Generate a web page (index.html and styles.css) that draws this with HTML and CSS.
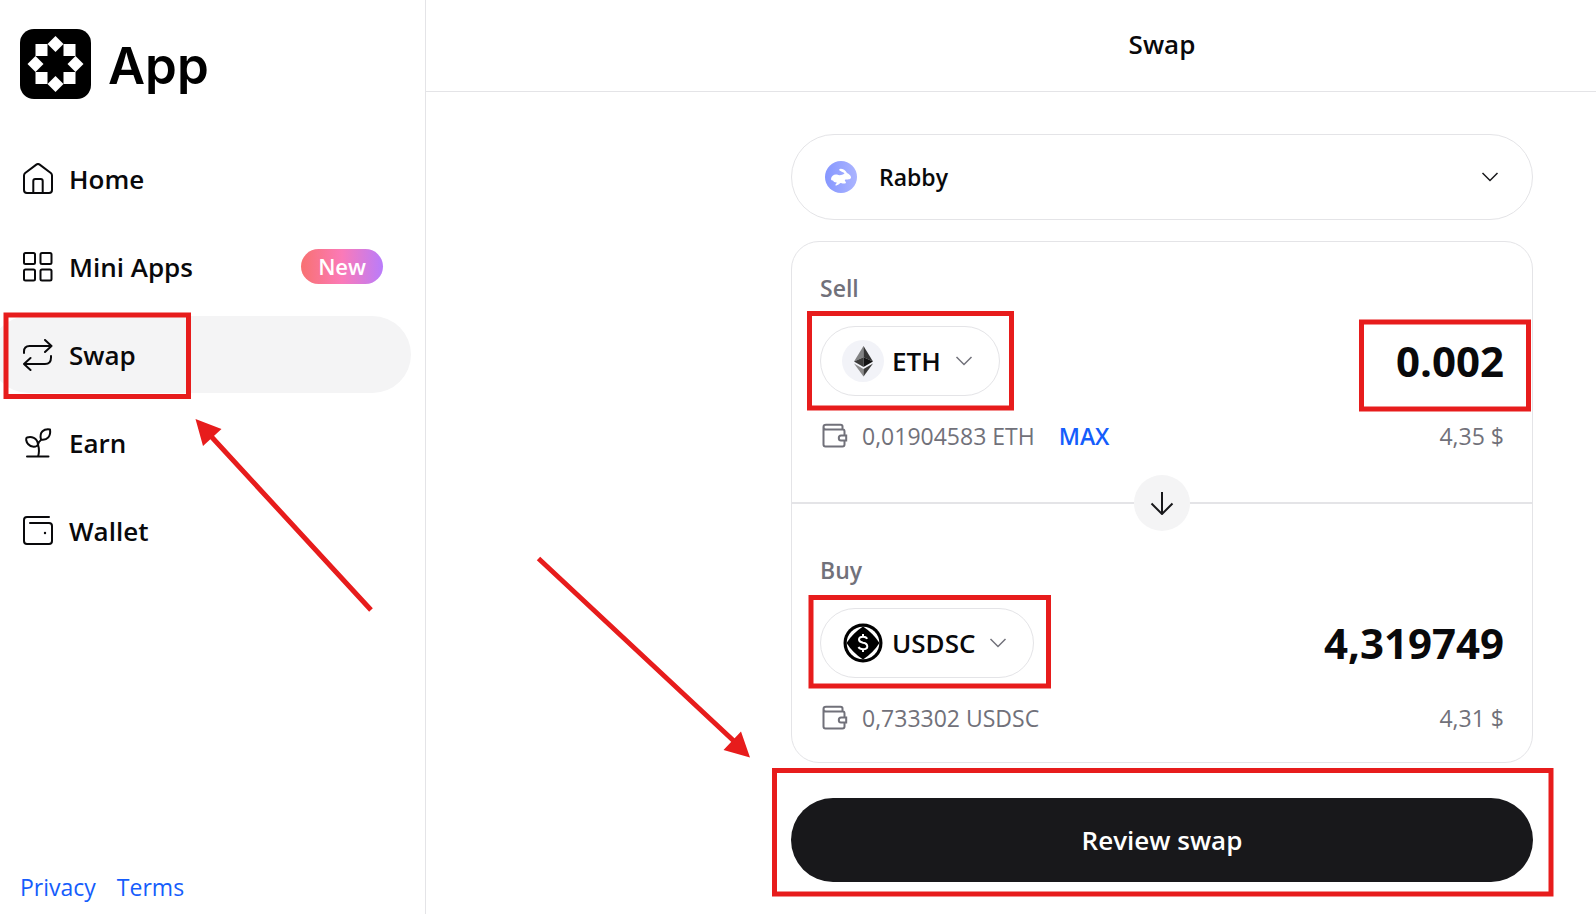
FILE: index.html
```html
<!DOCTYPE html>
<html lang="en">
<head>
<meta charset="utf-8">
<meta name="viewport" content="width=device-width, initial-scale=1">
<title>Swap</title>
<link rel="stylesheet" href="styles.css">
</head>
<body>
<div class="app">
  <aside class="sidebar">
    <a class="brand" href="#">
      <svg class="brand-mark" viewBox="0 0 71 70" aria-hidden="true">
        <rect width="71" height="70" rx="14"/>
        <g fill="#fff">
          <path d="M35.500 7l8 8-8 8-8-8zM35.500 47l8 8-8 8-8-8zM15.500 27l8 8-8 8-8-8zM55.500 27l8 8-8 8-8-8z"/>
          <path d="M15.500 15h12v12h-12zM43.500 15h12v12h-12zM15.500 43h12v12h-12zM43.500 43h12v12h-12z"/>
        </g>
      </svg>
      <span>App</span>
    </a>
    <nav class="nav">
      <a class="nav-item" href="#">
        <svg class="nav-icon" viewBox="0 0 32 32" aria-hidden="true"><path d="M2 12.500Q2 11 3.200 10L14.300 1.600Q16 .4 17.700 1.600L28.800 10Q30 11 30 12.500V27Q30 30 27 30H5Q2 30 2 27zM11.300 30V18Q11.300 16 13.300 16H18.700Q20.700 16 20.700 18V30"/></svg>
        <span>Home</span>
      </a>
      <a class="nav-item" href="#">
        <svg class="nav-icon" viewBox="0 0 32 32" aria-hidden="true"><rect x="2" y="2" width="11" height="11" rx="1.500"/><rect x="18.500" y="2" width="11" height="11" rx="1.500"/><rect x="2" y="18.500" width="11" height="11" rx="1.500"/><rect x="18.500" y="18.500" width="11" height="11" rx="1.500"/></svg>
        <span>Mini Apps</span>
        <span class="tag">New</span>
      </a>
      <a class="nav-item nav-item-active" href="#" aria-current="page">
        <svg class="nav-icon" viewBox="0 0 32 32" aria-hidden="true"><path d="M2 14V12.500Q2 7 7.500 7H29.500M23 1L29.500 7L23 13M29 17V18.500Q29 25 23 25H2M8.500 19L2 25L8.500 31"/></svg>
        <span>Swap</span>
      </a>
      <a class="nav-item" href="#">
        <svg class="nav-icon" viewBox="0 0 32 32" aria-hidden="true"><path d="M5 29.500H26.500M16 29.500C17.600 25 17.300 22 16 17.500M16 17.500C14.800 20.500 9 20.500 6 17C4 14.500 3.500 11 5 10.500C9 9 15.500 10.500 16 17.500zM16 17.500C16.300 15.500 17 14.500 19 13M19 12.500C17 5 22 1.500 28 2.500C29 9 25.500 13.500 19 12.500z"/></svg>
        <span>Earn</span>
      </a>
      <a class="nav-item" href="#">
        <svg class="nav-icon" viewBox="0 0 32 32" aria-hidden="true"><path d="M27 2H5Q2 2 2 5V26Q2 29 5 29H27Q30 29 30 26V11Q30 8 27 8H8"/><circle class="dot" cx="23" cy="18" r="1.200"/></svg>
        <span>Wallet</span>
      </a>
    </nav>
    <footer class="legal">
      <a href="#">Privacy</a>
      <a href="#">Terms</a>
    </footer>
  </aside>

  <main class="main">
    <header class="topbar"><h1 class="title">Swap</h1></header>
    <form class="swap">
      <button class="account" type="button" aria-haspopup="listbox">
        <svg class="avatar" viewBox="0 0 32 32" aria-hidden="true">
          <defs>
            <linearGradient id="rabby" x1="0" y1="0" x2="1" y2="0"><stop offset="0" stop-color="#8697ff"/><stop offset="1" stop-color="#abb4ff"/></linearGradient>
          </defs>
          <circle cx="16" cy="16" r="16" fill="url(#rabby)"/>
          <path fill="#fff" d="M6 18C6.500 14.500 9 13 12 13.500C15 15 17 14 19.500 12.500C18 10.500 14.300 10.500 14.200 8.500C15 6.800 20.500 8.500 22 12C24.500 13 26.500 15.500 26 17C25 19 22.500 18 20 18.800C19 19.500 21 20.500 21 22C19.500 23 17.500 22.500 16 22C14.500 22 13.500 24.500 10.500 24.500C10 23.500 11.500 22.800 11.800 21.500C9.500 21.500 8.500 20.500 8 19.500C7 19.500 6 19 6 18z"/>
        </svg>
        <span>Rabby</span>
        <svg class="chevron chevron-end" viewBox="0 0 18 12" aria-hidden="true"><path d="M1.500 2L9 9.500L16.500 2"/></svg>
      </button>

      <div class="card">
        <section class="side">
          <label class="side-label" for="sell">Sell</label>
          <div class="row row-token">
            <button class="token" type="button" aria-haspopup="dialog">
              <svg class="coin" viewBox="0 0 42 42" aria-hidden="true">
                <circle cx="21" cy="21" r="21" fill="#f2f3f8"/>
                <path fill="#828384" d="M21.500 6L12 21.500L21.500 17.300z"/>
                <path fill="#343434" d="M21.500 6L31 21.500L21.500 17.300z"/>
                <path fill="#3c3c3b" d="M12 21.500L21.500 17.300V27z"/>
                <path fill="#131313" d="M31 21.500L21.500 17.300V27z"/>
                <path fill="#8c8c8c" d="M12 23.500L21.500 29V36.500z"/>
                <path fill="#3c3c3b" d="M31 23.500L21.500 29V36.500z"/>
              </svg>
              <span>ETH</span>
              <svg class="chevron" viewBox="0 0 18 12" aria-hidden="true"><path d="M1.500 2L9 9.500L16.500 2"/></svg>
            </button>
            <input class="amount" id="sell" type="text" inputmode="decimal" value="0.002">
          </div>
          <div class="row row-balance">
            <svg class="purse" viewBox="0 0 26 26" aria-hidden="true"><path d="M22.500 12.500V8.500Q22.500 6.500 21 6.500H4Q1.500 6.500 1.500 4Q1.500 1.800 4 1.800H18.500Q20.500 1.800 20.500 3.500V6.500M1.500 4V21.500Q1.500 23.500 3.500 23.500H20.500Q22.500 23.500 22.500 21.500V17.500M24.200 12.500H19Q16.800 12.500 16.800 15Q16.800 17.500 19 17.500H24.200z"/></svg>
            <span>0,01904583 ETH</span>
            <button class="max" type="button">MAX</button>
            <span class="fiat">4,35 $</span>
          </div>
        </section>
        <div class="divider">
          <button class="flip" type="button" aria-label="Switch tokens">
            <svg class="flip-icon" viewBox="0 0 24 24" aria-hidden="true"><path d="M12 1V23M1.500 12.500L12 23L22.500 12.500"/></svg>
          </button>
        </div>
        <section class="side side-buy">
          <label class="side-label" for="buy">Buy</label>
          <div class="row row-token">
            <button class="token" type="button" aria-haspopup="dialog">
              <svg class="coin" viewBox="0 0 42 42" aria-hidden="true">
                <circle cx="21" cy="21" r="19.500"/>
                <circle cx="21" cy="21" r="16.300" fill="#fff"/>
                <path d="M21 4.500Q31 11 37.500 21Q31 31 21 37.500Q11 31 4.500 21Q11 11 21 4.500z"/>
                <path d="M25.300 16.800Q24 14.800 21 14.800Q17 14.800 17 17.600Q17 20 21 20.800Q25.300 21.500 25.300 24.400Q25.300 27.200 21 27.200Q17.700 27.200 16.500 25M21 12V14.800M21 27.200V30" fill="none" stroke="#fff" stroke-width="2"/>
              </svg>
              <span>USDSC</span>
              <svg class="chevron" viewBox="0 0 18 12" aria-hidden="true"><path d="M1.500 2L9 9.500L16.500 2"/></svg>
            </button>
            <input class="amount" id="buy" type="text" inputmode="decimal" value="4,319749">
          </div>
          <div class="row row-balance">
            <svg class="purse" viewBox="0 0 26 26" aria-hidden="true"><path d="M22.500 12.500V8.500Q22.500 6.500 21 6.500H4Q1.500 6.500 1.500 4Q1.500 1.800 4 1.800H18.500Q20.500 1.800 20.500 3.500V6.500M1.500 4V21.500Q1.500 23.500 3.500 23.500H20.500Q22.500 23.500 22.500 21.500V17.500M24.200 12.500H19Q16.800 12.500 16.800 15Q16.800 17.500 19 17.500H24.200z"/></svg>
            <span>0,733302 USDSC</span>
            <span class="fiat">4,31 $</span>
          </div>
        </section>
      </div>
      <button class="review" type="submit">Review swap</button>
    </form>
  </main>
</div>

<svg class="marks" width="1596" height="914" viewBox="0 0 1596 914" aria-hidden="true">
  <g fill="none" stroke="#e71c1c" stroke-width="5">
    <rect x="6" y="315" width="182.500" height="81.500"/>
    <rect x="809.500" y="313.500" width="202" height="94.500"/>
    <rect x="1361.500" y="322" width="167" height="87"/>
    <rect x="811" y="597.500" width="237.500" height="88.500"/>
    <rect x="774.500" y="770.500" width="776.500" height="123.500"/>
    <path d="M371 610L208 433M538.500 558.500L736 743"/>
  </g>
  <path fill="#e71c1c" d="M195.500 419L221.500 429L203 446zM750 757.500L741 731.500L723.500 750z"/>
</svg>
</body>
</html>
```
FILE: styles.css
```css
*, *::before, *::after { box-sizing: border-box; }

body {
  margin: 0;
  background: #fff;
  color: #09090b;
  font-family: "Open Sans", "Noto Sans", sans-serif;
  font-size: 23px;
  line-height: 36px;
}

a { color: inherit; text-decoration: none; }

button, input {
  font: inherit;
  color: inherit;
  background: none;
  border: 0;
  padding: 0;
  margin: 0;
}

button { cursor: pointer; }

svg { flex: none; }

.app { display: flex; min-height: 100vh; }

.sidebar {
  display: flex;
  flex-direction: column;
  flex: 0 0 426px;
  padding: 29px 14px 9px 20px;
  border-right: 1px solid #e4e4e7;
  overflow: hidden;
}

.brand {
  display: flex;
  align-items: center;
  gap: 17px;
  height: 70px;
  color: #000;
  font-family: Inter, sans-serif;
  font-size: 51px;
  font-weight: 600;
  line-height: 70px;
}

.brand span { padding-top: 4px; }

.brand-mark { width: 71px; height: 70px; }

.nav {
  display: flex;
  flex-direction: column;
  gap: 11px;
  margin: 41px 0 0 -30px;
}

.nav-item {
  display: flex;
  align-items: center;
  gap: 15px;
  height: 77px;
  padding: 0 28px 0 32px;
  border-radius: 39px;
  font-size: 26px;
  font-weight: 600;
}

.nav-item-active { background: #f4f4f5; }

.nav-icon {
  width: 32px;
  height: 32px;
  fill: none;
  stroke: currentColor;
  stroke-width: 2;
  stroke-linecap: round;
  stroke-linejoin: round;
}

.dot { fill: currentColor; stroke: none; }

.tag {
  margin-left: auto;
  padding: 0 17px;
  border-radius: 18px;
  background: linear-gradient(90deg, #f87171, #fb7ab8 50%, #b97cfb);
  color: #fff;
  font-size: 22px;
  line-height: 35px;
}

.legal {
  display: flex;
  gap: 21px;
  margin-top: auto;
  color: #155dfc;
}

.main { flex: 1; min-width: 0; }

.topbar {
  display: flex;
  justify-content: flex-end;
  padding: 0 63px 2px 32px;
  border-bottom: 1px solid #e4e4e7;
}

.title {
  width: 100%;
  max-width: 742px;
  margin: 0;
  font-size: 26px;
  font-weight: 600;
  line-height: 89px;
  text-align: center;
}

.swap {
  display: flex;
  flex-direction: column;
  width: 100%;
  max-width: 837px;
  margin-left: auto;
  padding: 42px 63px 32px 32px;
}

.account {
  display: flex;
  align-items: center;
  gap: 22px;
  height: 86px;
  padding: 0 33px;
  border: 1px solid #e4e4e7;
  border-radius: 43px;
  font-weight: 600;
}

.avatar { width: 32px; height: 32px; }

.chevron {
  width: 18px;
  height: 12px;
  fill: none;
  stroke: #71717a;
  stroke-width: 1.5;
}

.chevron-end { margin-left: auto; stroke: #18181b; }

.card {
  margin: 21px 0 35px;
  border: 1px solid #e4e4e7;
  border-radius: 28px;
}

.side { padding: 28px 28px 48px; color: #71717a; }

.side-buy { padding: 48px 28px 26px; }

.side-label { display: block; font-weight: 600; }

.row { display: flex; align-items: center; gap: 14px; }

.row-token { margin: 20px 0 22px; justify-content: space-between; }

.row-balance { padding-left: 2px; }

.token {
  display: flex;
  align-items: center;
  gap: 8px;
  height: 70px;
  padding: 0 26px 0 21px;
  border: 1px solid #e4e4e7;
  border-radius: 35px;
  color: #09090b;
  font-size: 26px;
  font-weight: 600;
}

.token .chevron { margin-left: 6px; }

.coin { width: 42px; height: 42px; }

.amount {
  flex: 1;
  min-width: 0;
  color: #09090b;
  font-size: 42px;
  font-weight: 700;
  line-height: 56px;
  text-align: right;
}

.purse {
  width: 26px;
  height: 26px;
  fill: none;
  stroke: currentColor;
  stroke-width: 2;
}

.max { margin-left: 10px; color: #155dfc; font-weight: 600; }

.fiat { margin-left: auto; }

.divider {
  display: flex;
  align-items: center;
  justify-content: center;
  height: 2px;
  background: #e4e4e7;
}

.flip {
  display: grid;
  place-items: center;
  flex: none;
  width: 56px;
  height: 56px;
  border-radius: 50%;
  background: #f4f4f5;
}

.flip-icon {
  width: 24px;
  height: 24px;
  fill: none;
  stroke: #18181b;
  stroke-width: 2;
}

.review {
  height: 84px;
  border-radius: 42px;
  background: #18181b;
  color: #fff;
  font-size: 26px;
  font-weight: 600;
}

.marks {
  position: absolute;
  top: 0;
  left: 0;
  pointer-events: none;
}
```
